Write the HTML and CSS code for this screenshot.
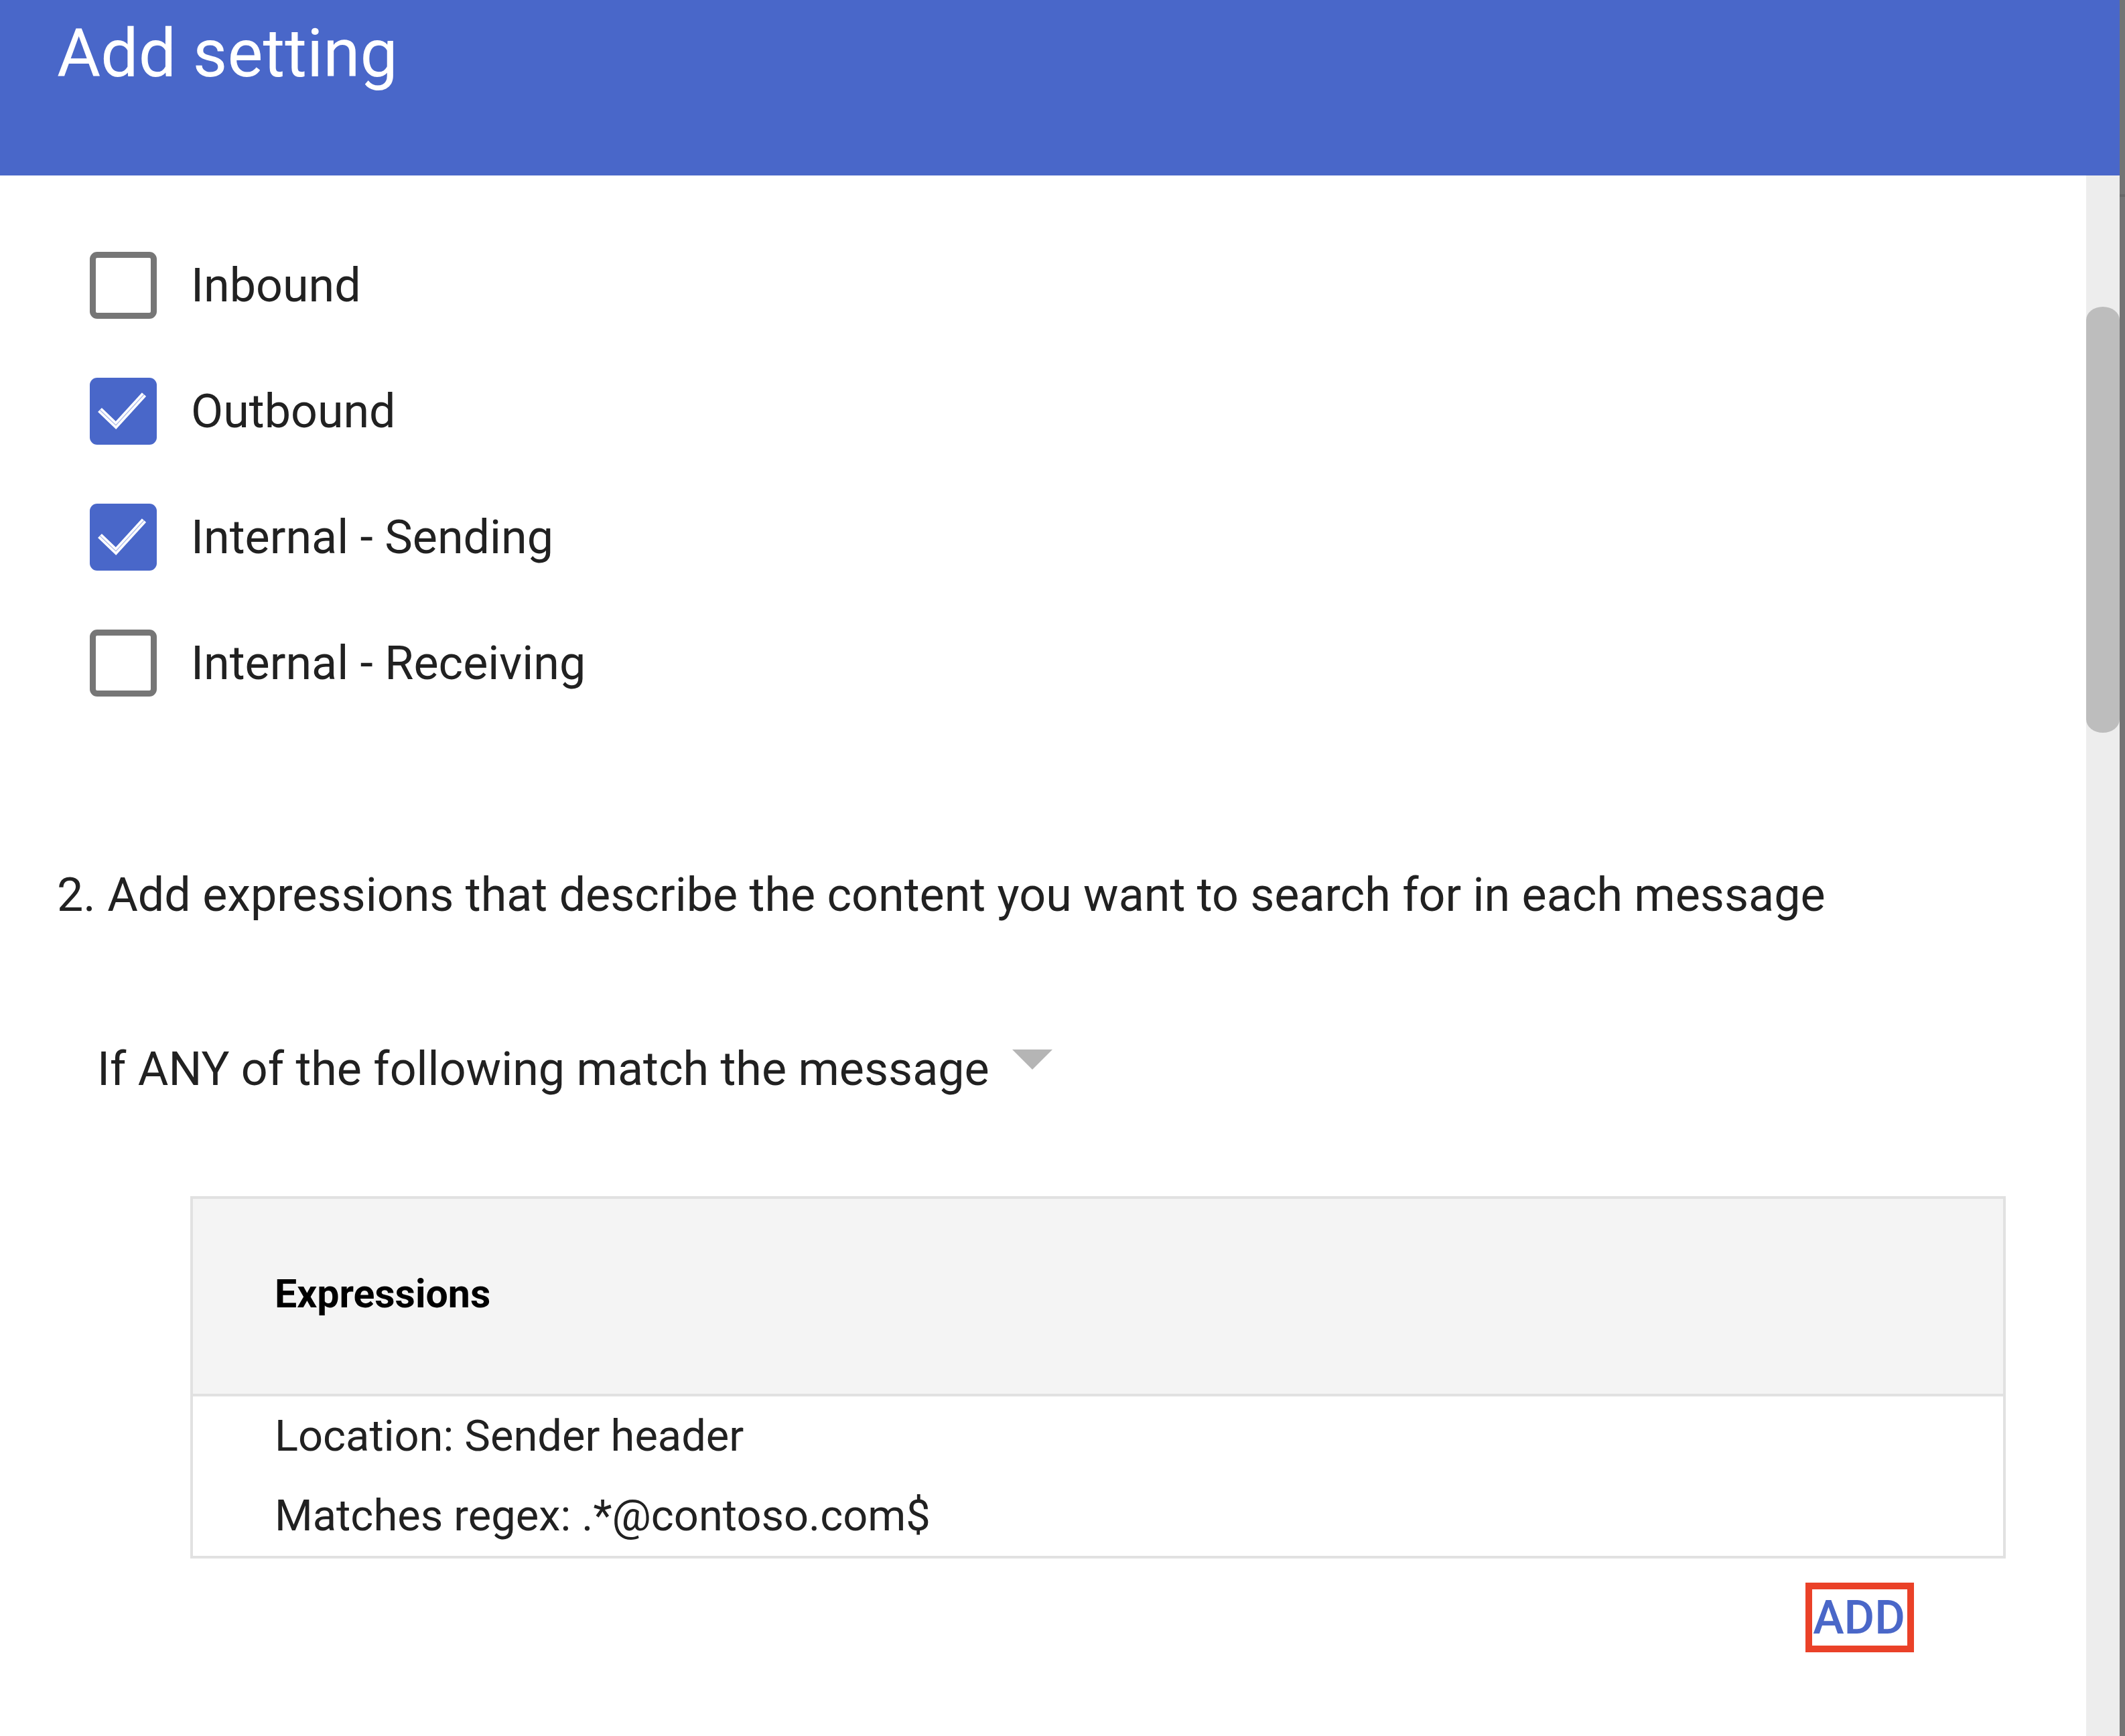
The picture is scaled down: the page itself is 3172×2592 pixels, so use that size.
FILE: index.html
```html
<!DOCTYPE html>
<html lang="en">
<head>
<meta charset="utf-8">
<title>Add setting</title>
<link rel="stylesheet" href="styles.css">
</head>
<body>
<div class="dialog">
  <header class="header">
    <h1 class="title">Add setting</h1>
  </header>
  <div class="content">
    <main class="main">
      <ul class="checks">
        <li class="check-row">
          <span class="box"></span>
          <span class="label">Inbound</span>
        </li>
        <li class="check-row">
          <span class="box checked">
            <svg class="tick" viewBox="0 0 100 100"><polyline points="15,48 39,71 81,25" class="tick-w"/><polyline points="15,48 39,71 81,25" class="tick-b"/></svg>
          </span>
          <span class="label">Outbound</span>
        </li>
        <li class="check-row">
          <span class="box checked">
            <svg class="tick" viewBox="0 0 100 100"><polyline points="15,48 39,71 81,25" class="tick-w"/><polyline points="15,48 39,71 81,25" class="tick-b"/></svg>
          </span>
          <span class="label">Internal - Sending</span>
        </li>
        <li class="check-row">
          <span class="box"></span>
          <span class="label">Internal - Receiving</span>
        </li>
      </ul>

      <p class="step">2. Add expressions that describe the content you want to search for in each message</p>

      <div class="match">
        <span class="match-text">If ANY of the following match the message</span>
        <span class="caret"></span>
      </div>

      <div class="table">
        <div class="thead">Expressions</div>
        <div class="tbody">
          <div class="trow">Location: Sender header</div>
          <div class="trow">Matches regex: .*@contoso.com$</div>
        </div>
      </div>

      <div class="actions">
        <span class="add">ADD</span>
      </div>
    </main>
    <div class="track">
      <div class="thumb"></div>
    </div>
  </div>
</div>
<div class="backdrop">
  <div class="bd-line"></div>
</div>
</body>
</html>
```

FILE: styles.css
```css
* { box-sizing: border-box; }

html, body {
  margin: 0;
  padding: 0;
}

body {
  width: 3172px;
  height: 2592px;
  overflow: hidden;
  display: flex;
  font-family: Roboto, "Liberation Sans", Arial, sans-serif;
  color: #212121;
  background: #ffffff;
}

.dialog {
  width: 3164px;
  height: 2592px;
  display: flex;
  flex-direction: column;
  background: #ffffff;
}

.header {
  height: 262px;
  flex: 0 0 262px;
  background: #4967c9;
  padding: 20px 0 0 85px;
}

.title {
  margin: 0;
  font-size: 100px;
  font-weight: 400;
  line-height: 120px;
  color: #ffffff;
}

.content {
  flex: 1;
  display: flex;
  min-height: 0;
}

.main {
  flex: 1;
  min-width: 0;
  overflow: hidden;
}

.checks {
  list-style: none;
  margin: 0;
  padding: 114px 0 0 134px;
  display: flex;
  flex-direction: column;
  gap: 88px;
}

.check-row {
  display: flex;
  align-items: center;
  height: 100px;
  gap: 51px;
}

.box {
  width: 100px;
  height: 100px;
  flex: 0 0 100px;
  border: 9px solid #767676;
  border-radius: 11px;
  background: #ffffff;
  display: flex;
}

.box.checked {
  border: none;
  background: #4967c9;
}

.tick {
  width: 100px;
  height: 100px;
}

.tick-w {
  fill: none;
  stroke: #ffffff;
  stroke-width: 8.5;
  stroke-linecap: butt;
  stroke-linejoin: miter;
}

.tick-b {
  fill: none;
  stroke: #a9b7e8;
  stroke-width: 1.2;
}

.label {
  font-size: 70px;
  line-height: 100px;
  color: #212121;
}

.step {
  margin: 246px 0 0 85px;
  font-size: 70px;
  line-height: 100px;
  color: #212121;
}

.match {
  margin: 160px 0 0 145px;
  display: flex;
  align-items: flex-start;
  gap: 34px;
}

.match-text {
  font-size: 70px;
  line-height: 100px;
  color: #212121;
}

.caret {
  margin-top: 21px;
  width: 0;
  height: 0;
  border-left: 30px solid transparent;
  border-right: 30px solid transparent;
  border-top: 30px solid #b5b5b5;
}

.table {
  margin: 140px 0 0 284px;
  width: 2710px;
  border: 4px solid #e1e1e1;
}

.thead {
  height: 295px;
  background: #f4f4f4;
  border-bottom: 4px solid #e1e1e1;
  padding: 0 0 8px 122px;
  display: flex;
  align-items: center;
  font-size: 59px;
  font-weight: 700;
  color: #000000;
}

.tbody {
  background: #ffffff;
}

.trow {
  padding-left: 122px;
  font-size: 65px;
  line-height: 119px;
  color: #212121;
}

.actions {
  display: flex;
  justify-content: flex-end;
  padding-right: 257px;
  margin-top: 36px;
}

.add {
  border: 10px solid #ea4128;
  padding: 0 3px 0 1px;
  font-size: 70px;
  font-weight: 500;
  line-height: 84px;
  color: #4a67c8;
}

.track {
  width: 50px;
  flex: 0 0 50px;
  background: #ededed;
  padding-top: 196px;
}

.thumb {
  height: 636px;
  background: #bdbdbd;
  border-radius: 25px / 20px;
}

.backdrop {
  width: 8px;
  height: 2592px;
  background: #747474;
  padding-top: 290px;
}

.bd-line {
  height: 4px;
  background: #686868;
}
```
